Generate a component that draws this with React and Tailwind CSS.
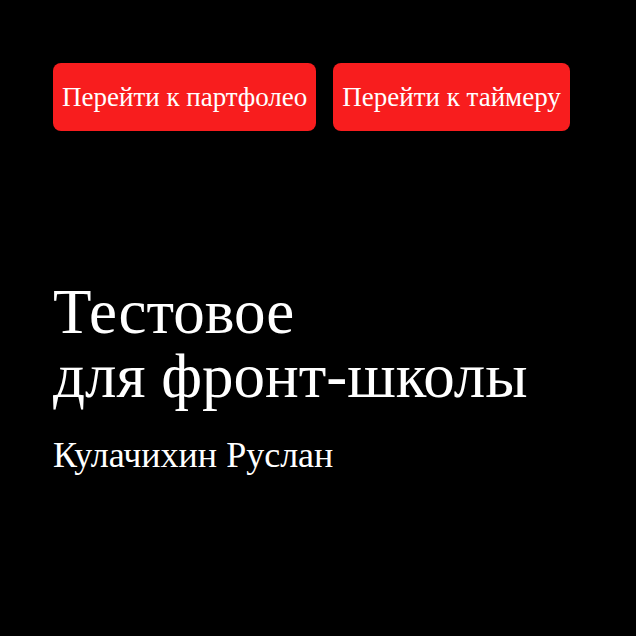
import React from 'react';

const serif = { fontFamily: '"Liberation Serif", "Times New Roman", serif' };

function NavButton({ children }) {
  return (
    <button className="h-[68px] px-[9px] rounded-[8px] bg-[#f81d1e] text-white text-[27px] leading-none">
      {children}
    </button>
  );
}

export default function App() {
  return (
    <div className="w-[636px] h-[636px] bg-black text-white px-[53px] pt-[63px]" style={serif}>
      <div className="flex gap-[17px]">
        <NavButton>Перейти к партфолео</NavButton>
        <NavButton>Перейти к таймеру</NavButton>
      </div>
      <h1 className="mt-[149px] text-[63px] leading-[64px] font-normal">
        Тестовое
        <br />
        для фронт-школы
      </h1>
      <p className="mt-[29px] text-[36px] leading-none">Кулачихин Руслан</p>
    </div>
  );
}
